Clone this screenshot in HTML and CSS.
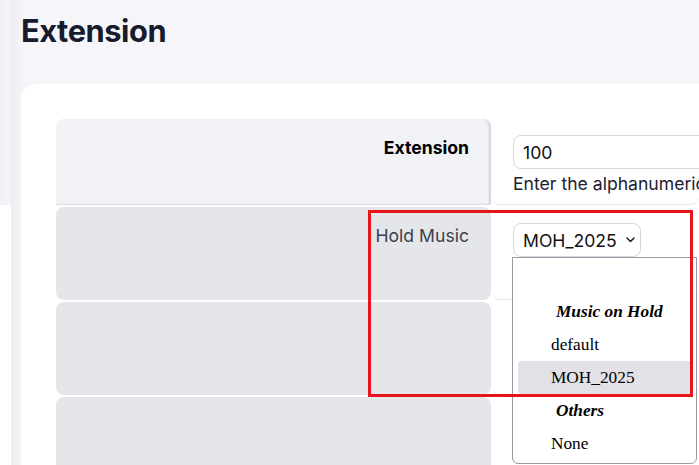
FILE: index.html
```html
<!DOCTYPE html>
<html lang="en">
<head>
<meta charset="utf-8">
<title>Extension</title>
<link rel="stylesheet" href="styles.css">
</head>
<body>
<div class="app">
  <div class="main">
    <h1 class="title">Extension</h1>
    <div class="card">
      <div class="form-table">
        <div class="label label-strong">Extension</div>
        <div class="field">
          <input class="text-input" type="text" value="100">
          <div class="help">Enter the alphanumeric extension number.</div>
        </div>

        <div class="label label-dark">Hold Music</div>
        <div class="field">
          <div class="select">
            <span>MOH_2025</span>
            <svg class="chev" width="9" height="6" viewBox="0 0 9 6"><path d="M1 1 L4.5 4.5 L8 1" fill="none" stroke="#1f2330" stroke-width="1.6" stroke-linecap="round" stroke-linejoin="round"/></svg>
          </div>
        </div>

        <div class="label label-dark"></div>
        <div class="field"></div>

        <div class="label label-dark"></div>
        <div class="field"></div>
      </div>
    </div>
  </div>

  <div class="dropdown">
    <div class="opt"></div>
    <div class="group">Music on Hold</div>
    <div class="opt">default</div>
    <div class="opt selected">MOH_2025</div>
    <div class="group">Others</div>
    <div class="opt">None</div>
  </div>

  <div class="highlight-box"></div>
</div>
</body>
</html>
```

FILE: styles.css
```css
* { box-sizing: border-box; }

html, body {
  margin: 0;
  padding: 0;
  background: #ffffff;
}

body {
  font-family: Inter, "Noto Sans", sans-serif;
  width: 699px;
  height: 465px;
  overflow: hidden;
}

.app {
  position: relative;
  height: 465px;
  background:
    linear-gradient(to right, #f1f1f6, #f6f6fa 12px) top left / 100% 205px no-repeat,
    #ffffff;
}

.main {
  margin-left: 11px;
  padding-left: 10px;
  height: 465px;
  background: linear-gradient(to right, #ececf3, #f3f3f8) left top / 10px 100% no-repeat;
}

.title {
  margin: 0;
  padding-top: 12px;
  font-size: 30.8px;
  line-height: 37px;
  font-weight: 700;
  color: #161b2e;
  letter-spacing: -0.45px;
}

.card {
  margin-top: 35px;
  background: #ffffff;
  border-radius: 16px 0 0 0;
  padding: 35px 0 0 35px;
  height: 381px;
  overflow: hidden;
}

.form-table {
  display: grid;
  grid-template-columns: 435px 1fr;
  grid-template-rows: 86px 93px 93px 93px;
  column-gap: 1px;
  row-gap: 2px;
}

.label {
  padding: 16px 22px 0 0;
  text-align: right;
  font-size: 17.6px;
  line-height: 25px;
  border-radius: 8px;
}

.label-strong {
  background: #f1f2f6;
  font-weight: 700;
  color: #000000;
  border-radius: 8px 8px 0 0;
  border-bottom: 1px solid #dcdde2;
  box-shadow: inset -3px 0 2px -1px #d2d3d9;
}

.label-dark {
  background: #e5e6ea;
  color: #3a4050;
}

.field {
  padding: 16px 0 0 21px;
  background: #ffffff;
  border-bottom: 1px solid #e6e8ef;
  border-radius: 8px;
  font-size: 17.6px;
  line-height: 25px;
  color: #1c2030;
  white-space: nowrap;
  overflow: hidden;
}

.text-input {
  display: block;
  width: 320px;
  height: 34px;
  border: 1px solid #d5d7de;
  border-radius: 8px;
  padding: 0 10px 0 9px;
  font-family: Inter, "Noto Sans", sans-serif;
  font-size: 17.6px;
  color: #111111;
  background: #ffffff;
  outline: none;
}

.help {
  margin-top: 2px;
  color: #1c2030;
}

.select {
  display: flex;
  align-items: center;
  justify-content: space-between;
  width: 128px;
  height: 34px;
  border: 1px solid #d5d7de;
  border-radius: 8px;
  padding: 0 5px 0 9px;
  color: #111111;
  background: #ffffff;
}

.chev { display: block; }

.dropdown {
  position: absolute;
  left: 512px;
  top: 257px;
  width: 185px;
  height: 207px;
  background: #ffffff;
  border: 1px solid #9a9aa2;
  border-radius: 0 0 6px 6px;
  padding: 4px 4px 0 5px;
  font-family: "Liberation Serif", "Times New Roman", serif;
  font-size: 17.3px;
  color: #000000;
}

.opt, .group {
  height: 33px;
  line-height: 33px;
  white-space: nowrap;
}

.opt {
  padding-left: 33px;
  border-radius: 4px;
}

.group {
  padding-left: 38px;
  font-weight: 700;
  font-style: italic;
}

.opt.selected {
  background: #e1e1e6;
}

.highlight-box {
  position: absolute;
  left: 368px;
  top: 210px;
  width: 325px;
  height: 187px;
  border: 3px solid #e8141c;
  pointer-events: none;
}
```
